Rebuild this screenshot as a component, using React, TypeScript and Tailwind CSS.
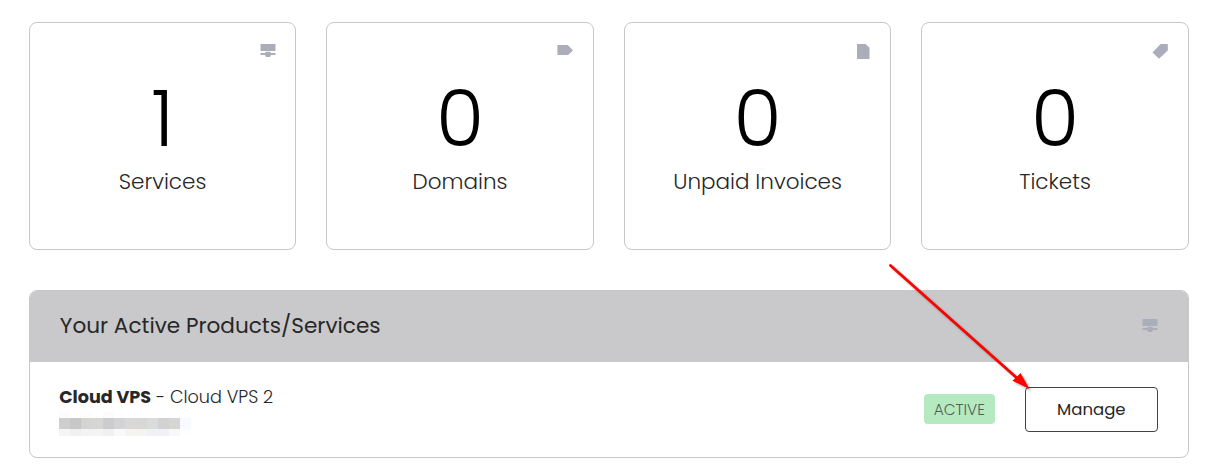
import type { ReactNode } from "react";

interface Stat {
  value: number;
  label: string;
  icon: ReactNode;
}

function ServerIcon() {
  return (
    <svg width="16" height="14" viewBox="0 0 16 14" fill="currentColor">
      <path d="M0.5 0h15v7h-15z" />
      <path d="M0.5 9h4.5l1-1.2h4l1 1.2h4.5v2H11l-1 2H6l-1-2H0.5z" />
    </svg>
  );
}

function DomainIcon() {
  return (
    <svg width="16" height="14" viewBox="0 0 16 14" fill="currentColor">
      <path d="M1 1h9.5a1 1 0 0 1 .8.4L16 6.5l-4.7 4.2a1 1 0 0 1-.8.3H1a.6.6 0 0 1-.6-.6V1.6A.6.6 0 0 1 1 1z" />
    </svg>
  );
}

function InvoiceIcon() {
  return (
    <svg width="16" height="15" viewBox="0 0 16 15" fill="currentColor">
      <path d="M2 0h8.5l4 3.8V15H2z" />
    </svg>
  );
}

function TicketIcon() {
  return (
    <svg width="16" height="15" viewBox="0 0 16 15" fill="currentColor">
      <path d="M8.6 0h6.6a.6.6 0 0 1 .6.6v5.8L7 14.8 0.5 8.4z" />
    </svg>
  );
}

const stats: Stat[] = [
  { value: 1, label: "Services", icon: <ServerIcon /> },
  { value: 0, label: "Domains", icon: <DomainIcon /> },
  { value: 0, label: "Unpaid Invoices", icon: <InvoiceIcon /> },
  { value: 0, label: "Tickets", icon: <TicketIcon /> },
];

// Pixelated hostname, one colour per mosaic cell
const mosaic = [
  ["#fcfcfc", "#ffffff", "#fdfdfd", "#ffffff", "#fcfcfd", "#ffffff", "#ffffff", "#ffffff", "#ffffff", "#ffffff", "#ffffff", "#ffffff"],
  ["#cececd", "#c7c7c7", "#d4d4d3", "#d6d6d4", "#cbccd0", "#d3d3d5", "#d8d8d8", "#d9d7d5", "#dadcdb", "#d2d2d3", "#d7d5d4", "#f7fbff"],
  ["#f5f5f5", "#f0f0f0", "#f2f3f6", "#f4f4f2", "#f0f0f0", "#f9f9f9", "#f5f4f3", "#f4f4f2", "#f0f1f4", "#f0f1f4", "#f8f8f8", "#fdfeff"],
];

const rowHeights = ["h-[6px]", "h-[11px]", "h-[7px]"];

function StatCard({ stat }: { stat: Stat }) {
  return (
    <div className="flex h-[228px] flex-col rounded-lg border border-[#c7c7c9] bg-white">
      <div className="flex h-[55px] items-start justify-end pt-5 pr-[19.6px] text-[#abadba]">
        <div className="flex h-4 items-center">{stat.icon}</div>
      </div>
      <div className="flex h-[82px] items-center justify-center text-[78px] leading-none font-light text-black">
        {stat.value}
      </div>
      <p className="mt-[6px] text-center text-[21.5px] leading-8 font-light">{stat.label}</p>
    </div>
  );
}

export default function App() {
  return (
    <main className="relative h-[476px] w-[1213px] overflow-hidden bg-white pt-[22px] pr-[24.2px] pl-[28.8px] font-['Poppins','Inter',sans-serif] text-[#272727]">
      <div className="grid grid-cols-4 gap-[30px]">
        {stats.map((stat) => (
          <StatCard key={stat.label} stat={stat} />
        ))}
      </div>

      <section className="mt-10 h-[168px] overflow-hidden rounded-lg border border-[#c7c7c9]">
        <div className="flex h-[71px] items-center justify-between bg-[#c9c9cb] px-[30px] pb-0.5">
          <h2 className="text-[21.6px] leading-8">Your Active Products/Services</h2>
          <span className="text-[#abadba]">
            <ServerIcon />
          </span>
        </div>

        <div className="flex h-[95px] items-center justify-between pr-[30px] pl-[29.4px]">
          <div className="pt-px">
            <p className="text-[17.6px] leading-6 font-light">
              <span className="font-bold">Cloud VPS</span> - Cloud VPS 2
            </p>
            <div className="mt-[3px] w-[132px]">
              {mosaic.map((row, i) => (
                <div key={i} className={`flex ${rowHeights[i]}`}>
                  {row.map((color, j) => (
                    <span key={j} className="w-[11px]" style={{ backgroundColor: color }} />
                  ))}
                </div>
              ))}
            </div>
          </div>
          <div className="flex items-center gap-[30px]">
            <span className="mb-px flex h-[30px] w-[71px] items-center justify-center rounded bg-[#b5eac1] pt-0.5 text-[15.4px] font-light text-[#555d57]">
              ACTIVE
            </span>
            <button className="h-[45px] w-[133px] rounded border border-[#444446] bg-white pt-0.5 text-[16.5px]">
              Manage
            </button>
          </div>
        </div>
      </section>

      {/* Pointer towards the manage button */}
      <svg
        className="pointer-events-none absolute top-[260px] left-[885px] drop-shadow-[2px_2px_1px_rgba(0,0,0,0.3)]"
        width="150"
        height="135"
        viewBox="885 260 150 135"
      >
        <path d="M890.5 265.5 1018 379" stroke="#ff0000" strokeWidth="2.8" strokeLinecap="round" />
        <path d="M1029.5 389 1012.5 380.8 1016 377.5 1020.5 373z" fill="#ff0000" />
      </svg>
    </main>
  );
}
